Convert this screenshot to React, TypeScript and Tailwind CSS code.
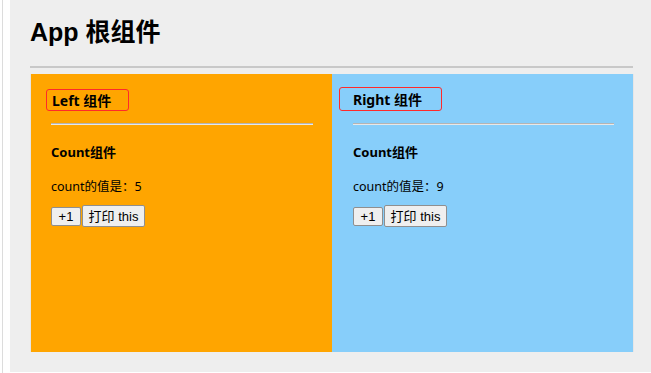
import React from "react";

const cjk = "font-['Noto_Sans','Noto_Sans_CJK_SC',sans-serif]";
const btn =
  "h-[19px] px-0 whitespace-nowrap flex items-center justify-center bg-[#efefef] border border-[#8f8f8f] rounded-[2px] text-[13px] leading-none text-black font-['Liberation_Sans','Noto_Sans_CJK_SC',sans-serif]";

function Count({ value }: { value: number }) {
  return (
    <div className={cjk}>
      <h4 className="mt-[18px] text-[13px] leading-[18px] font-bold text-black">Count组件</h4>
      <p className="mt-[17px] text-[12.5px] leading-[18px] text-black">count的值是：{value}</p>
      <div className="mt-[9px] flex items-center gap-[1px]">
        <button className={`${btn} w-[30px]`}>+1</button>
        <button className={`${btn} h-[22px] w-[63px]`}>打印 this</button>
      </div>
    </div>
  );
}

export default function App() {
  return (
    <div className="flex h-[373px] w-[651px] overflow-hidden bg-white">
      {/* browser frame line */}
      <div className="ml-[2px] w-[1px] bg-[#dcdcdc]" />
      <div className="ml-[7px] flex-1 h-[372px] bg-[#eeeeee] pl-[20px] pt-[18px]">
        <h1 className="text-[25px] leading-[28px] font-bold text-black font-['Liberation_Sans','Noto_Sans_CJK_SC',sans-serif]">
          App 根组件
        </h1>
        <div className="mt-[20px] h-[2px] w-[603px] bg-[#c8c8c8]" />
        <div className="mt-[6px] flex h-[278px] w-[604px] border-x border-[#e6e6e6]">
          {/* Left */}
          <div className="w-[301px] bg-[#ffa500] pl-[20px] pr-[19px] pt-[15px]">
            <h3
              className={`${cjk} -ml-[5px] flex h-[22px] w-[83px] items-center whitespace-nowrap rounded-[3px] border border-[#ff2a2a] pl-[5px] text-[14px] font-bold text-black`}
            >
              Left 组件
            </h3>
            <div className="mt-[12px] h-[2px] border-t border-[#b4b4b4] bg-[#e8e8e8]" />
            <Count value={5} />
          </div>
          {/* Right */}
          <div className="w-[301px] bg-[#87cefa] pl-[21px] pr-[19px] pt-[13px]">
            <h3
              className={`${cjk} -ml-[14px] flex h-[24px] w-[103px] items-center whitespace-nowrap rounded-[3px] border border-[#ff2a2a] pl-[13px] text-[14px] font-bold text-black`}
            >
              Right 组件
            </h3>
            <div className="mt-[12px] h-[2px] border-t border-[#b4b4b4] bg-[#e8e8e8]" />
            <Count value={9} />
          </div>
        </div>
      </div>
    </div>
  );
}
